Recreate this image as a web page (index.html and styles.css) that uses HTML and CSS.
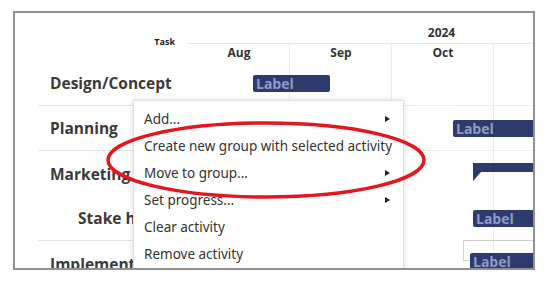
FILE: index.html
```html
<!DOCTYPE html>
<html lang="en">
<head>
    <meta charset="UTF-8">
    <title>Gantt - context menu</title>
    <link rel="stylesheet" href="styles.css">
</head>
<body>
    <div class="frame">
        <div class="gantt-head">
            <div class="task-col">Task</div>
            <div class="time-head">
                <div class="year-row"><span class="year">2024</span></div>
                <div class="month-row grid-bg">
                    <div class="month">Aug</div>
                    <div class="month">Sep</div>
                    <div class="month">Oct</div>
                    <div class="month">Nov</div>
                </div>
            </div>
        </div>

        <div class="gantt-row sep">
            <div class="task-name">Design/Concept</div>
            <div class="chart grid-bg line">
                <div class="bar" style="left: 65px; width: 77px;">Label</div>
            </div>
        </div>
        <div class="gantt-row sep">
            <div class="task-name">Planning</div>
            <div class="chart grid-bg line">
                <div class="bar" style="left: 265px; width: 200px;">Label</div>
            </div>
        </div>
        <div class="gantt-row">
            <div class="task-name">Marketing</div>
            <div class="chart grid-bg">
                <div class="summary" style="left: 285px; width: 200px;"></div>
            </div>
        </div>
        <div class="gantt-row sep">
            <div class="task-name sub">Stake holders</div>
            <div class="chart grid-bg">
                <div class="bar" style="left: 285px; width: 200px;">Label</div>
            </div>
        </div>
        <div class="gantt-row">
            <div class="task-name">Implementation</div>
            <div class="chart grid-bg">
                <div class="link" style="left: 275px;"></div>
                <div class="bar low" style="left: 282px; width: 200px;">Label</div>
            </div>
        </div>

        <div class="menu">
            <div class="menu-item sub">Add...</div>
            <div class="menu-item">Create new group with selected activity</div>
            <div class="menu-item sub">Move to group...</div>
            <div class="menu-item sub">Set progress...</div>
            <div class="menu-item">Clear activity</div>
            <div class="menu-item">Remove activity</div>
        </div>

        <!-- annotation circle -->
        <svg class="mark" width="518" height="255" viewBox="0 0 518 255">
            <ellipse cx="251" cy="147" rx="158" ry="37" fill="none" stroke="#e5161d" stroke-width="3.5"/>
        </svg>
    </div>
</body>
</html>
```

FILE: styles.css
```css
* {
    margin: 0;
    padding: 0;
    box-sizing: border-box;
}

body {
    font-family: 'Open Sans', 'Noto Sans', sans-serif;
    background: white;
    width: 550px;
    height: 284px;
    overflow: hidden;
}

.frame {
    position: relative;
    margin: 11px 0 0 13px;
    width: 522px;
    height: 259px;
    border: 2px solid #919191;
    overflow: hidden;
    background: white;
}

.gantt-head {
    display: grid;
    grid-template-columns: 173px 1fr;
    height: 48px;
}

.task-col {
    align-self: end;
    text-align: right;
    padding: 0 13px 13px 0;
    font-size: 9px;
    line-height: 12px;
    font-weight: 700;
    color: #222;
}

.year-row {
    height: 31px;
    display: grid;
    grid-template-columns: repeat(5, 102px);
    align-items: end;
    padding-bottom: 2px;
    border-bottom: 1px solid #e8e8e8;
}

.year {
    grid-column: 3;
    text-align: center;
    padding-right: 3px;
    font-size: 12px;
    line-height: 16px;
    font-weight: 700;
    color: #333;
}

.month-row {
    height: 17px;
    display: grid;
    grid-template-columns: repeat(5, 102px);
}

.month {
    text-align: center;
    font-size: 12px;
    line-height: 17px;
    font-weight: 700;
    color: #333;
}

.grid-bg {
    background: repeating-linear-gradient(90deg, transparent 0 101px, #ebebeb 101px 102px);
}

.gantt-row {
    display: grid;
    grid-template-columns: 173px 1fr;
    height: 45px;
}

.task-name {
    display: flex;
    align-items: center;
    margin-left: 23px;
    padding-left: 12px;
    font-size: 15.5px;
    font-weight: 700;
    color: #3a3a3a;
    white-space: nowrap;
    overflow: hidden;
}

.task-name.sub {
    padding-left: 40px;
}

.gantt-row.sep .task-name {
    border-bottom: 1px solid #e4e4e4;
}

.chart {
    position: relative;
}

.chart.line {
    border-bottom: 1px solid #efefef;
}

.bar {
    position: absolute;
    top: 14px;
    height: 17px;
    padding-left: 3px;
    background: #2d3b6c;
    border-radius: 2px;
    color: #8f9bc8;
    font-size: 14px;
    line-height: 17px;
    font-weight: 700;
}

.bar.low {
    top: 12px;
}

.summary {
    position: absolute;
    top: 12px;
    height: 9px;
    background: #2d3b6c;
}

.summary::after {
    content: '';
    position: absolute;
    left: 0;
    top: 9px;
    border-top: 9px solid #2d3b6c;
    border-right: 8px solid transparent;
}

.link {
    position: absolute;
    top: -1px;
    width: 300px;
    height: 21px;
    border-top: 1px solid #cfcfcf;
    border-left: 1px solid #cfcfcf;
}

.link::after {
    content: '';
    position: absolute;
    left: 0;
    top: 19px;
    width: 8px;
    border-top: 1px solid #cfcfcf;
}

.menu {
    position: absolute;
    left: 118px;
    top: 87px;
    width: 271px;
    padding: 5px 0;
    background: white;
    border: 1px solid #e0e0e0;
    box-shadow: 0 0 6px rgba(0,0,0,0.15);
    font-family: 'Noto Sans', sans-serif;
    font-size: 13.5px;
    color: #333;
}

.menu-item {
    position: relative;
    height: 27px;
    line-height: 27px;
    padding-left: 10px;
    white-space: nowrap;
}

.menu-item.sub::after {
    content: '';
    position: absolute;
    right: 13px;
    top: 10px;
    border-left: 5px solid #222;
    border-top: 3.5px solid transparent;
    border-bottom: 3.5px solid transparent;
}

.mark {
    position: absolute;
    left: 0;
    top: 0;
    pointer-events: none;
}
```
